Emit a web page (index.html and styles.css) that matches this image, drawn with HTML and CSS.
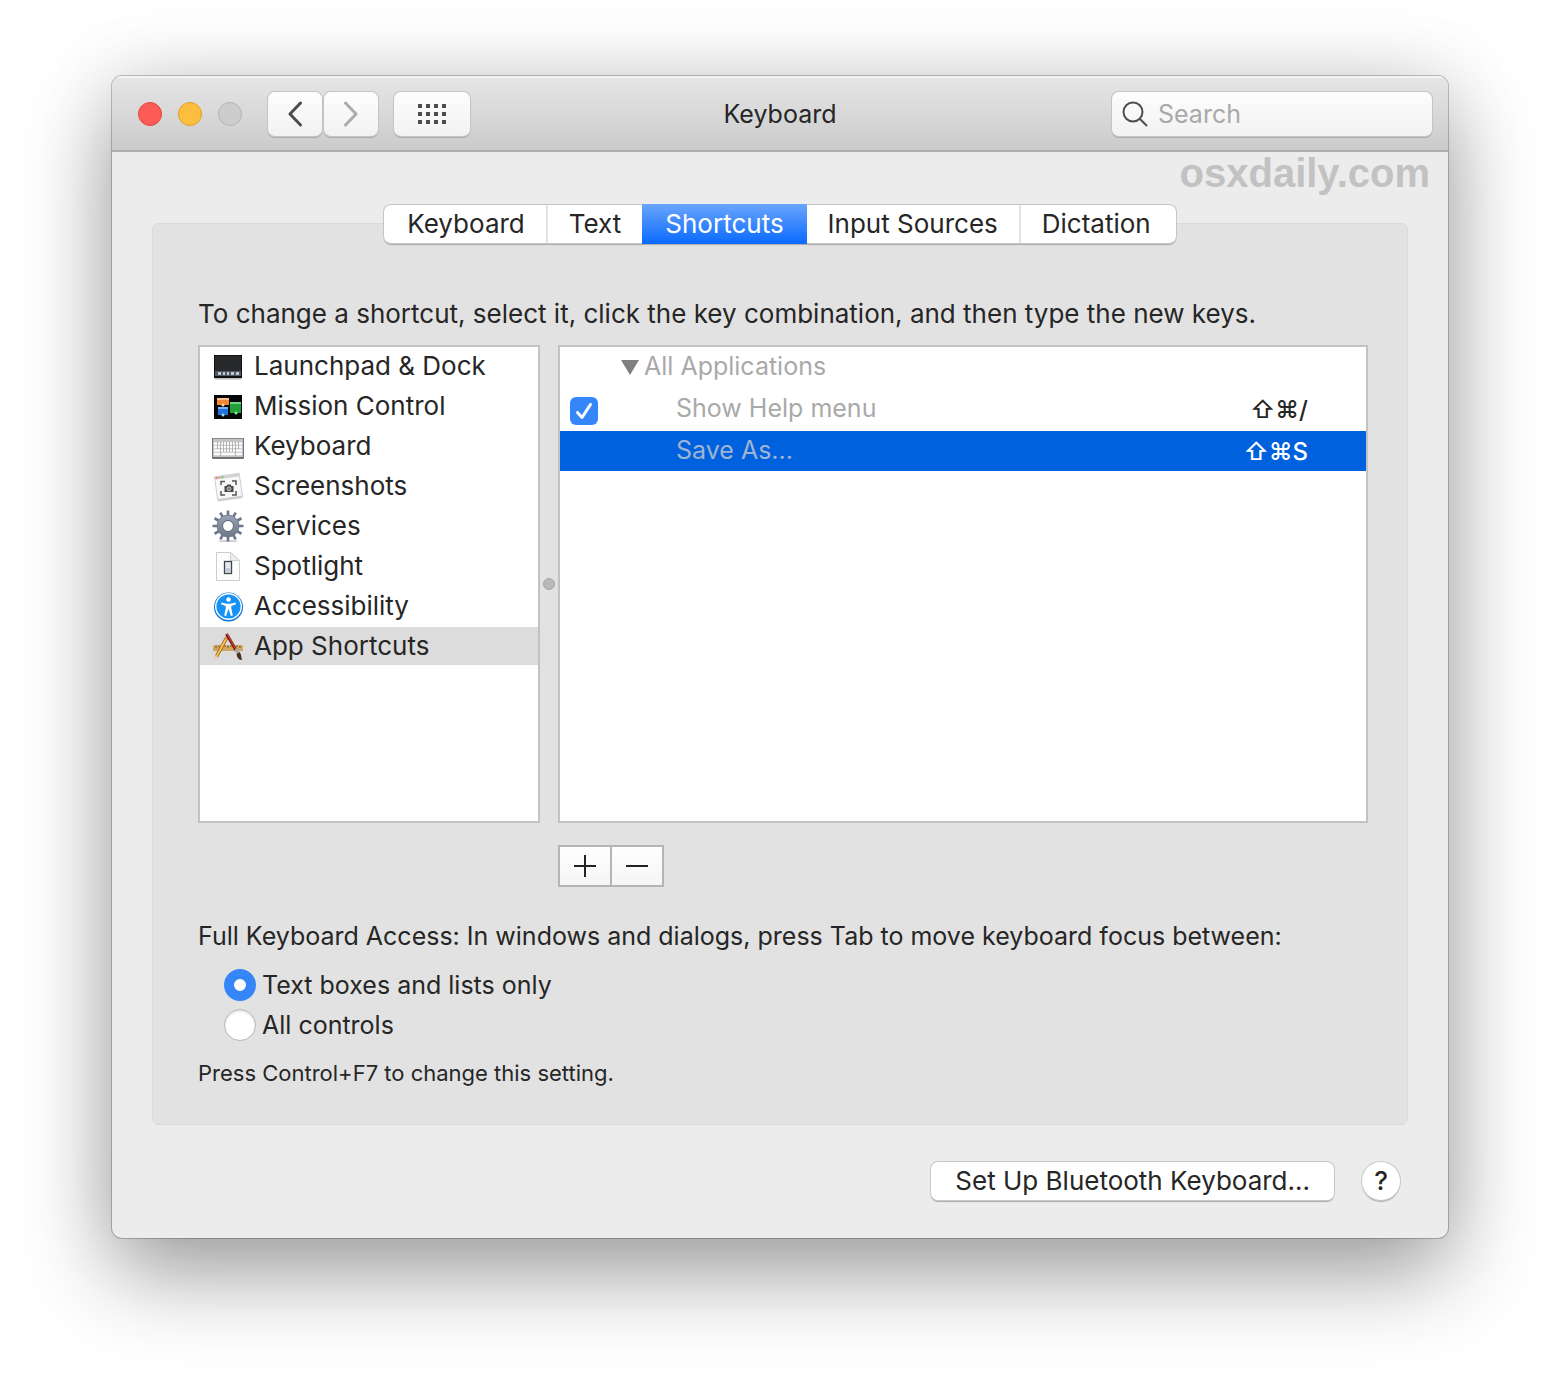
FILE: index.html
```html
<!DOCTYPE html>
<html lang="en">
<head>
    <meta charset="UTF-8">
    <meta name="viewport" content="width=device-width, initial-scale=1.0">
    <title>Keyboard</title>
    <link rel="stylesheet" href="styles.css">
</head>
<body>

<main class="window">
    <header class="titlebar">
        <div class="lights">
            <button class="light close" aria-label="Close"></button>
            <button class="light minimize" aria-label="Minimize"></button>
            <button class="light zoom" aria-label="Zoom" disabled></button>
        </div>
        <div class="history">
            <button class="tool" aria-label="Back">
                <svg width="16" height="26" viewBox="0 0 16 26"><path d="M13.500 2 3 13l10.500 11" /></svg>
            </button>
            <button class="tool forward" aria-label="Forward">
                <svg width="16" height="26" viewBox="0 0 16 26"><path d="M2.500 2 13 13 2.500 24" /></svg>
            </button>
        </div>
        <button class="tool grid-button" aria-label="Show All">
            <svg width="28" height="20" viewBox="0 0 28 20"><path class="dots" d="M0 0h4v4H0zM8 0h4v4H8zM16 0h4v4h-4zM24 0h4v4h-4zM0 8h4v4H0zM8 8h4v4H8zM16 8h4v4h-4zM24 8h4v4h-4zM0 16h4v4H0zM8 16h4v4H8zM16 16h4v4h-4zM24 16h4v4h-4z" /></svg>
        </button>
        <h1>Keyboard</h1>
        <label class="search">
            <svg width="26" height="26" viewBox="0 0 26 26"><circle cx="11" cy="11" r="9.500" /><path d="m18 18 7 7" /></svg>
            <input type="search" placeholder="Search" aria-label="Search">
        </label>
    </header>

    <div class="watermark">osxdaily.com</div>

    <nav class="tabs">
        <button>Keyboard</button>
        <button>Text</button>
        <button class="active">Shortcuts</button>
        <button>Input Sources</button>
        <button>Dictation</button>
    </nav>

    <section class="group">
        <p class="hint">To change a shortcut, select it, click the key combination, and then type the new keys.</p>

        <div class="panes">
            <ul class="categories">
                <li><button>
                    <svg width="32" height="32" viewBox="0 0 32 32">
                        <rect x="2.500" y="6" width="27" height="23.500" fill="#bbb" />
                        <rect x="2" y="5" width="28" height="23" fill="#111" />
                        <rect x="3" y="6" width="26" height="15" fill="#26282a" />
                        <rect x="3" y="21" width="26" height="5" fill="#4f5a65" />
                        <path d="M6 23.500h3m2 0h2m2 0h2m2 0h3m2 0h3" stroke="#d3dce4" stroke-width="2.500" />
                    </svg>
                    Launchpad &amp; Dock
                </button></li>
                <li><button>
                    <svg width="32" height="32" viewBox="0 0 32 32">
                        <rect x="2" y="5" width="28" height="24" fill="#050608" />
                        <rect x="5" y="8" width="12" height="7" fill="#f48532" />
                        <rect x="5" y="8" width="12" height="2" fill="#ffc08a" />
                        <rect x="6" y="17" width="10" height="8" fill="#2273d8" />
                        <rect x="6" y="17" width="10" height="2" fill="#75b5ff" />
                        <rect x="18" y="12" width="11" height="11" fill="#22a13b" />
                        <rect x="18" y="12" width="11" height="2" fill="#72d680" />
                        <circle cx="11" cy="15" r="1.500" fill="#ffd9a8" />
                        <circle cx="11" cy="25" r="1.500" fill="#9dd3ff" />
                        <circle cx="24" cy="23" r="1.500" fill="#8ce89a" />
                    </svg>
                    Mission Control
                </button></li>
                <li><button>
                    <svg width="32" height="32" viewBox="0 0 32 32">
                        <rect y="8" width="32" height="21" rx="1" fill="#737373" />
                        <rect x="1" y="8" width="30" height="19" fill="#c3c3c3" />
                        <path d="M0 8.500h32" stroke="#888" />
                        <path d="M2 13.500h28M2 17h28M2 20.500h28M2 24h28" stroke="#fafafa" stroke-width="2.500" />
                        <path d="M5.500 12v7m3-7v14m3-14v10m3-10v10m3-10v10m3-10v10m3-10v14m3-14v7" stroke="#a5a5a5" stroke-width=".8" />
                    </svg>
                    Keyboard
                </button></li>
                <li><button>
                    <svg width="32" height="32" viewBox="0 0 32 32">
                        <g transform="rotate(-8 16 17)">
                            <rect x="4" y="6" width="25" height="24" fill="#cdcdcd" />
                            <rect x="4" y="5" width="25" height="23" fill="#f7f7f7" stroke="#cacaca" stroke-width=".8" />
                            <path d="M4 6.500h25" stroke="#d2d2d2" stroke-width="3" />
                            <circle cx="6" cy="6.500" r="1" fill="#f66" />
                            <circle cx="9" cy="6.500" r="1" fill="#e9a055" />
                            <circle cx="12" cy="6.500" r="1" fill="#5fc76b" />
                        </g>
                        <path d="M9 15v-3.500h4M20 11h4v4M24 21v4h-4M13 25H9v-4" fill="none" stroke="#555" stroke-width="1.500" />
                        <path d="M12.500 16h2l1-1.500h3l1 1.500h2v6h-9z" fill="#444" />
                        <circle cx="17" cy="18.800" r="2" fill="#777" stroke="#ddd" stroke-width=".8" />
                    </svg>
                    Screenshots
                </button></li>
                <li><button>
                    <svg width="32" height="32" viewBox="0 0 32 32">
                        <defs>
                            <linearGradient id="gear" x2="0" y2="1"><stop stop-color="#98a4b6" /><stop offset="1" stop-color="#6c7788" /></linearGradient>
                        </defs>
                        <ellipse cx="16" cy="31" rx="10" ry="1" fill="#ccc" />
                        <g stroke="#6c778a" stroke-width="2.600">
                            <path d="M16 .5v31M.5 16h31" />
                            <path d="M16 .5v31M.5 16h31" transform="rotate(30 16 16)" />
                            <path d="M16 .5v31M.5 16h31" transform="rotate(60 16 16)" />
                        </g>
                        <circle cx="16" cy="16" r="11" fill="url(#gear)" stroke="#6c778a" stroke-width=".8" />
                        <circle cx="16" cy="16" r="5.500" fill="#fff" stroke="#566074" />
                    </svg>
                    Services
                </button></li>
                <li><button>
                    <svg width="32" height="32" viewBox="0 0 32 32">
                        <path d="M4.500 2.500h14l9 8v20h-23z" fill="#fcfcfc" stroke="#cdcdcd" />
                        <path d="M18.500 2.500v8h9z" fill="#eee" stroke="#cfcfcf" />
                        <rect x="12.500" y="11.500" width="7" height="12" fill="#e6e9ee" stroke="#42464b" stroke-width="1.300" />
                        <path d="M13.500 18h5v4.500h-5z" fill="#c3c9d6" />
                    </svg>
                    Spotlight
                </button></li>
                <li><button>
                    <svg width="32" height="32" viewBox="0 0 32 32">
                        <circle cx="16.500" cy="17" r="14.500" fill="#0874d9" />
                        <circle cx="16.500" cy="16.500" r="12.800" fill="#1692f5" stroke="#fff" stroke-width="1.400" />
                        <circle cx="16.500" cy="9.500" r="2.200" fill="#fff" />
                        <path d="m9.500 12.500 5 1.300h4l5-1.300.4 1.700-4.600 1.700v2.600l1.500 7-1.900.6-2.100-6.600h-.6l-2.100 6.600-1.900-.6 1.500-7v-2.600l-4.600-1.700z" fill="#fff" />
                    </svg>
                    Accessibility
                </button></li>
                <li class="selected"><button>
                    <svg width="32" height="32" viewBox="0 0 32 32">
                        <rect x="1" y="15" width="30" height="6" fill="#cfa662" />
                        <path d="M1 15.500h30" stroke="#e8c27b" />
                        <path d="M4 15v3m3-3v2m3-2v3m3-3v2m3-2v3m3-3v2m3-2v3m3-3v2m3-2v3" stroke="#71501e" stroke-width=".9" />
                        <path d="M14.500 8 4.500 26.500" stroke="#80501a" stroke-width="3.500" />
                        <path d="M14.500 8 4.500 26.500" stroke="#f8bd48" stroke-width="2.200" />
                        <path d="m3 25-1.500 5 4.500-3z" fill="#e9c99c" />
                        <path d="m13 8 1.500-3 2.500 1.500-1.500 3z" fill="#d9827d" />
                        <path d="m14.500 4 10 17" stroke="#6d1a14" stroke-width="3" />
                        <path d="m15 4 9 15.500" stroke="#d34035" stroke-width="1.200" />
                        <path d="m22.500 20 2.500-2 2.500 4-2.500 2z" fill="#aaa" />
                        <path d="m24.500 24 3-2c2 2 1.500 5 2.500 8-3 0-5-2-5.500-6z" fill="#49301e" />
                    </svg>
                    App Shortcuts
                </button></li>
            </ul>

            <div class="splitter"><span class="knob"></span></div>

            <div class="shortcuts">
                <table>
                    <tbody>
                        <tr>
                            <td class="check"></td>
                            <td class="name parent"><span class="triangle"></span>All Applications</td>
                            <td class="keys"></td>
                        </tr>
                        <tr>
                            <td class="check">
                                <label class="checkbox">
                                    <input type="checkbox" checked aria-label="Show Help menu">
                                    <svg width="28" height="28" viewBox="0 0 28 28"><path d="m7.500 15.500 4.500 5 8.500-13" /></svg>
                                </label>
                            </td>
                            <td class="name">Show Help menu</td>
                            <td class="keys">⇧⌘/</td>
                        </tr>
                        <tr class="selected">
                            <td class="check"></td>
                            <td class="name">Save As...</td>
                            <td class="keys">⇧⌘S</td>
                        </tr>
                    </tbody>
                </table>
            </div>

            <div class="edit-buttons">
                <button aria-label="Add"><svg width="22" height="22" viewBox="0 0 22 22"><path d="M0 11h22M11 0v22" /></svg></button>
                <button aria-label="Remove"><svg width="22" height="22" viewBox="0 0 22 22"><path d="M0 11h22" /></svg></button>
            </div>
        </div>

        <p class="access">Full Keyboard Access: In windows and dialogs, press Tab to move keyboard focus between:</p>
        <div class="radios">
            <label><input type="radio" name="access" checked>Text boxes and lists only</label>
            <label><input type="radio" name="access">All controls</label>
        </div>
        <p class="note">Press Control+F7 to change this setting.</p>
    </section>

    <footer>
        <button class="push">Set Up Bluetooth Keyboard...</button>
        <button class="push help" aria-label="Help">?</button>
    </footer>
</main>

</body>
</html>
```
FILE: styles.css
```css
/* Global Styles */
* {
    box-sizing: border-box;
}

body {
    margin: 0;
    padding: 76px 112px 148px;
    background: #fff;
    font-family: Inter, "Liberation Sans", sans-serif;
    font-size: 25px;
    line-height: 32px;
    color: #262626;
}

button, input {
    font: inherit;
    color: inherit;
    margin: 0;
}

button {
    padding: 0;
    border: none;
    background: none;
}

p, h1, ul {
    margin: 0;
    padding: 0;
}

svg {
    display: block;
    flex: none;
}

/* Window */
.window {
    background: #ececec;
    border-radius: 10px;
    overflow: hidden;
    padding-bottom: 38px;
    box-shadow: 0 0 0 1px rgba(0, 0, 0, 0.22), 0 0 80px rgba(0, 0, 0, 0.1), 0 36px 90px rgba(0, 0, 0, 0.36);
}

.titlebar {
    display: grid;
    grid-template-columns: auto auto auto 1fr 320px;
    align-items: center;
    height: 76px;
    padding: 2px 16px 0 26px;
    background: linear-gradient(#e6e6e6, #cbcbcb);
    border-bottom: 2px solid #adadad;
    box-shadow: inset 0 2px #f3f3f3;
    position: relative;
}

.lights {
    display: flex;
    gap: 16px;
    margin-right: 26px;
}

.light {
    width: 24px;
    height: 24px;
    border-radius: 50%;
    border: 1px solid #b4b4b4;
    background: #cdcdcd;
}

.close {
    background: #fc5b57;
    border-color: #e14640;
}

.minimize {
    background: #fdbe3f;
    border-color: #dfa023;
}

.history {
    display: flex;
    gap: 2px;
    margin-right: 16px;
}

.tool {
    width: 54px;
    height: 44px;
    display: flex;
    align-items: center;
    justify-content: center;
    border-radius: 7px;
    background: linear-gradient(#fdfdfd, #f2f2f2);
    box-shadow: 0 0 0 1px #c4c4c4, 0 2px 1px #a9a9a9;
}

.tool path {
    fill: none;
    stroke: #4d4d4d;
    stroke-width: 3;
    stroke-linecap: round;
    stroke-linejoin: round;
}

.forward path {
    stroke: #ababab;
}

.tool .dots {
    fill: #4d4d4d;
    stroke: none;
}

.grid-button {
    width: 76px;
}

/* title is centred on the window, over the toolbar row */
.titlebar h1 {
    position: absolute;
    left: 0;
    right: 0;
    padding-top: 2px;
    text-align: center;
    font-size: 25px;
    font-weight: 400;
    pointer-events: none;
}

.search {
    grid-column: 5;
    display: flex;
    align-items: center;
    gap: 10px;
    height: 44px;
    padding: 0 10px;
    border-radius: 7px;
    background: linear-gradient(#fdfdfd, #f2f2f2);
    box-shadow: 0 0 0 1px #c4c4c4, 0 2px 1px #a9a9a9;
}

.search svg {
    fill: none;
    stroke: #4d4d4d;
    stroke-width: 2;
}

.search input {
    flex: 1;
    min-width: 0;
    padding: 0;
    border: none;
    outline: none;
    background: none;
    appearance: none;
}

.search input::placeholder {
    color: #a9a9a9;
}

.watermark {
    padding-right: 18px;
    text-align: right;
    font: bold 40px/42px "Liberation Sans", sans-serif;
    color: #c2c2c2;
}

/* Tabs */
.tabs {
    position: relative;
    z-index: 1;
    display: flex;
    width: fit-content;
    margin: 11px auto 0;
    height: 38px;
    border-radius: 7px;
    background: #fff;
    box-shadow: 0 0 0 1px #c6c6c6, 0 2px 1px #aaa;
    font-size: 26px;
}

.tabs button {
    padding: 0 21px;
    border-right: 2px solid #e3e3e3;
}

.tabs button:first-child {
    padding: 0 21px 0 23px;
}

.tabs button:last-child {
    padding-right: 25px;
    border: none;
}

.tabs button:nth-child(2) {
    border: none;
}

.tabs .active {
    margin: -1px 0;
    padding: 0 23px;
    border: none;
    color: #fff;
    background: linear-gradient(#6aa5fb, #0a6aff);
}

/* Group box */
.group {
    margin: -20px 40px 37px;
    padding: 74px 39px 37px 45px;
    border: 1px solid #d9d9d9;
    border-radius: 7px;
    background: #e2e2e2;
}

.hint {
    font-size: 26px;
}

.panes {
    display: grid;
    grid-template-columns: 342px 18px 1fr;
    margin-top: 15px;
}

.categories, .shortcuts {
    min-height: 478px;
    border: 2px solid #c2c2c2;
    background: #fff;
}

.categories {
    display: flex;
    flex-direction: column;
    gap: 2px;
    list-style: none;
}

.categories button {
    display: flex;
    align-items: center;
    gap: 10px;
    width: 100%;
    height: 38px;
    padding: 0 0 1px 12px;
    font-size: 26px;
    text-align: left;
}

.categories .selected {
    background: #dcdcdc;
}

.splitter {
    display: flex;
    align-items: center;
    justify-content: center;
}

.knob {
    width: 12px;
    height: 12px;
    border-radius: 50%;
    border: 1px solid #a6a6a6;
    background: #b8b8b8;
}

/* Shortcut table */
.shortcuts table {
    width: 100%;
    border-collapse: separate;
    border-spacing: 0;
}

.shortcuts td {
    height: 42px;
    padding: 0;
    border-bottom: 2px solid #fff;
}

.shortcuts .check {
    width: 60px;
    padding: 3px 0 0 10px;
}

.shortcuts .name {
    padding: 0 0 2px 56px;
    color: #a9a9a9;
}

.shortcuts .parent {
    padding-left: 1px;
}

.shortcuts .keys {
    padding: 2px 58px 0 0;
    font-size: 24px;
    font-weight: 500;
    text-align: right;
}

.shortcuts .selected td {
    background: #0061df;
}

.shortcuts .selected .name {
    color: #9fb4d2;
}

.shortcuts .selected .keys {
    color: #fff;
}

.triangle {
    display: inline-block;
    margin-right: 5px;
    border: 9px solid transparent;
    border-top: 15px solid #808080;
    border-bottom: none;
}

.checkbox {
    display: grid;
    width: 28px;
}

.checkbox input, .checkbox svg {
    grid-area: 1 / 1;
}

.checkbox input {
    appearance: none;
    width: 28px;
    height: 28px;
    border-radius: 6px;
    background: #3586f8;
}

.checkbox svg {
    pointer-events: none;
}

.checkbox path {
    fill: none;
    stroke: #fff;
    stroke-width: 3;
    stroke-linecap: round;
    stroke-linejoin: round;
}

.edit-buttons {
    grid-column: 3;
    display: flex;
    width: fit-content;
    margin-top: 22px;
    gap: 2px;
    padding: 2px;
    background: #b5b5b5;
}

.edit-buttons button {
    display: grid;
    place-items: center;
    width: 50px;
    height: 38px;
    background: linear-gradient(#fff, #f5f5f5);
}

.edit-buttons path {
    stroke: #222;
    stroke-width: 2;
}

/* Keyboard access */
.access {
    margin-top: 33px;
}

.radios {
    display: flex;
    flex-direction: column;
    gap: 8px;
    margin: 17px 0 18px 26px;
}

.radios label {
    display: flex;
    gap: 6px;
}

.radios input {
    appearance: none;
    width: 32px;
    height: 32px;
    border-radius: 50%;
    background: #fff;
    border: 1px solid #b5b5b5;
    box-shadow: inset 0 2px 2px #e8e8e8;
}

.radios input:checked {
    border: 10px solid #3586f8;
    box-shadow: none;
}

.note {
    font-size: 22px;
    line-height: 28px;
}

/* Footer */
footer {
    display: flex;
    justify-content: flex-end;
    gap: 28px;
    padding-right: 48px;
}

.push {
    height: 38px;
    padding: 0 24px;
    border-radius: 7px;
    background: #fff;
    box-shadow: 0 0 0 1px #c8c8c8, 0 2px 1px #aaa;
    font-size: 26px;
}

.help {
    width: 38px;
    padding: 0;
    border-radius: 50%;
    font-weight: 500;
}
```
